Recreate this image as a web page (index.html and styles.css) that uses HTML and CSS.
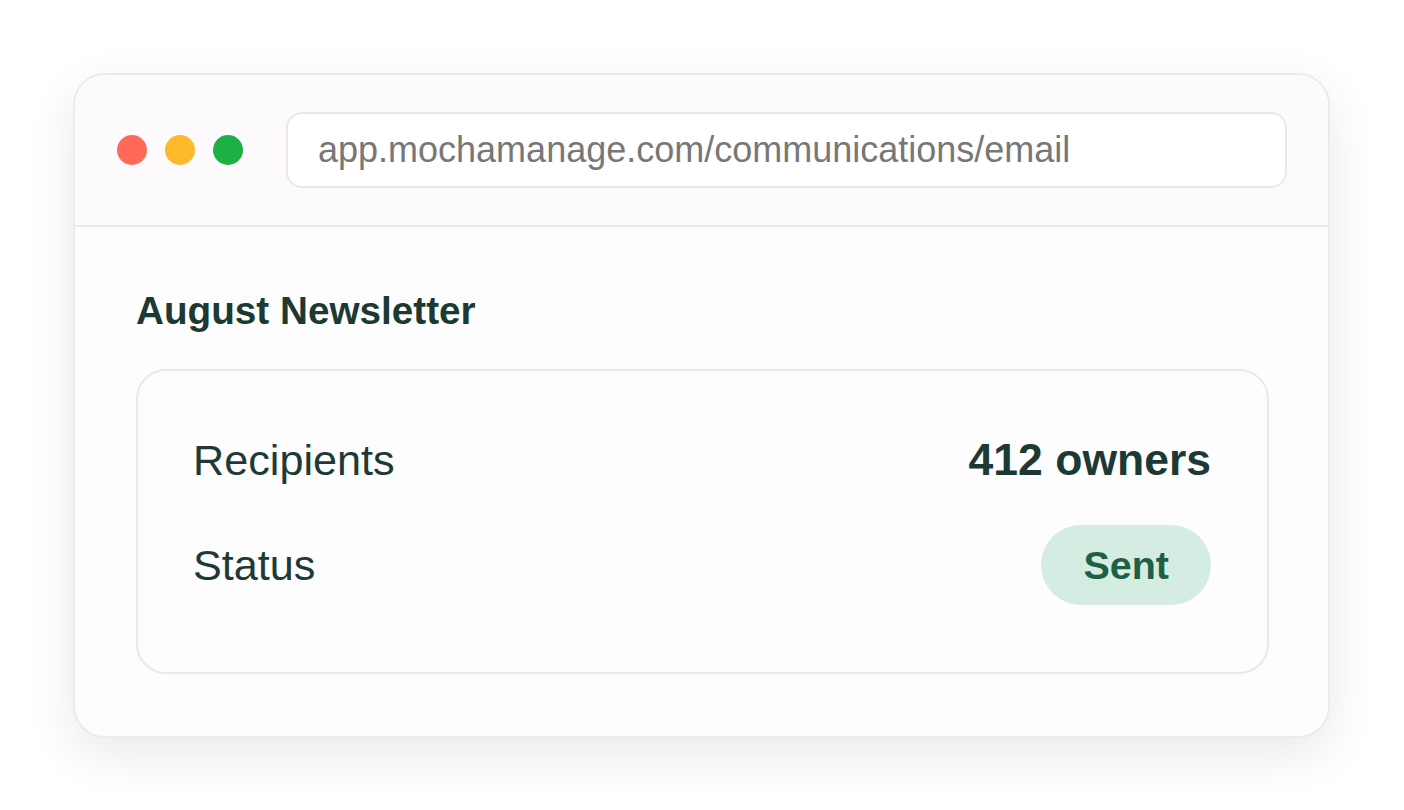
FILE: index.html
```html
<html>

<head>
  <title>August Newsletter</title>
  <link rel="stylesheet" href="styles.css">
</head>

<body>
  <div class="window">
    <div class="topbar">
      <div class="dots">
        <span class="dot red"></span>
        <span class="dot yellow"></span>
        <span class="dot green"></span>
      </div>
      <div class="urlbar">app.mochamanage.com/communications/email</div>
    </div>
    <div class="content">
      <div class="title">August Newsletter</div>
      <div class="card">
        <div class="row">
          <span class="label">Recipients</span>
          <span class="value">412 owners</span>
        </div>
        <div class="row">
          <span class="label">Status</span>
          <span class="pill">Sent</span>
        </div>
      </div>
    </div>
  </div>
</body>

</html>
```

FILE: styles.css
```css
body {
  margin: 0;
  background: #ffffff;
  font-family: "Liberation Sans", Arial, Helvetica, sans-serif;
  color: #1d3832;
}

.window {
  margin: 73px 74px 0 73px;
  border: 2px solid #ecebec;
  border-radius: 32px;
  background: #fefdfe;
  box-shadow: 0 16px 50px rgba(0, 0, 0, 0.09);
  overflow: hidden;
}

.topbar {
  display: flex;
  align-items: center;
  gap: 43px;
  padding: 37px 41px 37px 42px;
  background: #fcfafc;
  border-bottom: 2px solid #ebe8eb;
}

.dots {
  display: flex;
  gap: 18px;
}

.dot {
  width: 30px;
  height: 30px;
  border-radius: 50%;
}

.red {
  background: #ff6a58;
}

.yellow {
  background: #feb82b;
}

.green {
  background: #1db043;
}

.urlbar {
  flex: 1;
  height: 72px;
  display: flex;
  align-items: center;
  padding-left: 30px;
  background: #ffffff;
  border: 2px solid #ebe6ea;
  border-radius: 16px;
  font-size: 36px;
  color: #777777;
}

.content {
  padding: 62px 59px 62px 61px;
}

.title {
  font-size: 38.7px;
  font-weight: bold;
  color: #1c3a33;
  margin-bottom: 36px;
}

.card {
  border: 2px solid #ebe7ea;
  border-radius: 30px;
  padding: 64px 56px 67px 55px;
  display: flex;
  flex-direction: column;
  gap: 40px;
}

.row {
  display: flex;
  justify-content: space-between;
  align-items: center;
}

.label {
  font-size: 43.2px;
  color: #1f3a35;
}

.value {
  font-size: 44.5px;
  font-weight: bold;
  color: #1c3a33;
}

.pill {
  height: 80px;
  display: flex;
  align-items: center;
  padding: 0 42px;
  border-radius: 40px;
  background: #d5ece2;
  color: #1f5f45;
  font-size: 39.5px;
  font-weight: bold;
}
```
